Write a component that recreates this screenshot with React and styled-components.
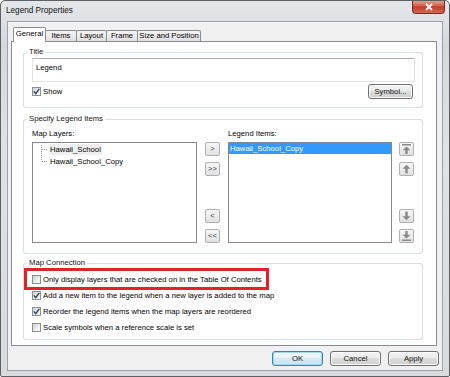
import React from 'react';
import styled, { createGlobalStyle, css } from 'styled-components';

const Global = createGlobalStyle`
  html, body { margin: 0; padding: 0; background: #ffffff; }
  body {
    font-family: "Liberation Sans", Arial, sans-serif;
    font-size: 7.7px;
    color: #000;
  }
  * { box-sizing: border-box; }
`;

const Window = styled.div`
  width: 450px;
  height: 377px;
  border: 1px solid #5d6166;
  border-radius: 5px 5px 2px 2px;
  background: linear-gradient(180deg, #e4e7ea 0%, #d5d9dd 12%, #dfe2e5 40%, #d9dcdf 100%);
  display: flex;
  flex-direction: column;
  overflow: hidden;
`;

const TitleBar = styled.div`
  height: 20px;
  flex: none;
  display: flex;
  align-items: flex-start;
  padding-left: 5px;
`;

const TitleText = styled.span`
  font-size: 8.2px;
  line-height: 20px;
  color: #111;
`;

const CloseButton = styled.div`
  margin-left: auto;
  margin-right: 4px;
  margin-top: -1px;
  width: 33px;
  height: 14px;
  border: 1px solid #7a2c22;
  border-top: none;
  border-radius: 0 0 4px 4px;
  background: linear-gradient(180deg, #e9ab9c 0%, #d46a55 40%, #c0402b 55%, #cf6a52 100%);
  display: flex;
  align-items: center;
  justify-content: center;
`;

const Frame = styled.div`
  flex: 1;
  display: flex;
  padding: 0 6px 5px 6px;
`;

const Client = styled.div`
  flex: 1;
  display: flex;
  flex-direction: column;
  border: 1px solid #9aa2ab;
  background: #f0f0f0;
  padding: 5px 3px 4px 3px;
`;

const TabStrip = styled.div`
  height: 14px;
  flex: none;
  display: flex;
  align-items: flex-end;
  padding-left: 2px;
`;

const Tab = styled.div`
  width: ${p => p.$w}px;
  border: 1px solid #898c95;
  border-bottom: none;
  border-radius: 2px 2px 0 0;
  text-align: center;
  white-space: nowrap;
  ${p => p.$active ? css`
    height: 15px;
    margin-bottom: -1px;
    background: #ffffff;
    line-height: 11px;
    position: relative;
    z-index: 2;
  ` : css`
    height: 11px;
    margin-left: -1px;
    background: linear-gradient(180deg, #f3f3f3 0%, #ebebeb 50%, #dedede 100%);
    line-height: 10px;
  `}
`;

const Panel = styled.div`
  flex: 1;
  display: flex;
  flex-direction: column;
  border: 1px solid #898c95;
  background: #ffffff;
  padding: 5px 13px 0 11px;
  margin-right: 2px;
`;

const Group = styled.div`
  margin-top: ${p => p.$mt || 0}px;
  display: flex;
  flex-direction: column;
`;

const GroupHead = styled.div`
  height: 10px;
  display: flex;
  align-items: flex-end;
`;

const HeadEdge = styled.div`
  height: 5px;
  border-top: 1px solid #d5dfe5;
  ${p => p.$right ? css`
    flex: 1;
    border-right: 1px solid #d5dfe5;
    border-top-right-radius: 3px;
  ` : css`
    width: 4px;
    border-left: 1px solid #d5dfe5;
    border-top-left-radius: 3px;
  `}
`;

const HeadText = styled.span`
  align-self: stretch;
  line-height: 10px;
  padding: 0 2px;
  color: #111;
`;

const GroupBody = styled.div`
  border: 1px solid #d5dfe5;
  border-top: none;
  border-radius: 0 0 3px 3px;
  padding: ${p => p.$pad};
  display: flex;
  flex-direction: column;
`;

const TextInput = styled.div`
  height: 24px;
  border: 1px solid #dfe3e8;
  border-top-color: #abadb3;
  background: #fff;
  padding: 4px 3px;
  line-height: 10px;
`;

const ShowRow = styled.div`
  margin-top: 2px;
  height: 15px;
  display: flex;
  align-items: center;
`;

const CheckRow = styled.div`
  height: 16px;
  display: flex;
  align-items: center;
  gap: 2px;
  white-space: nowrap;
`;

const Box = styled.span`
  width: 9px;
  height: 9px;
  flex: none;
  border: 1px solid #8e8f8f;
  background: linear-gradient(135deg, #cdd1d6 0%, #eef0f2 60%, #fafafa 100%);
  display: flex;
  align-items: center;
  justify-content: center;
`;

const PushButton = styled.div`
  width: ${p => p.$w}px;
  height: 15px;
  border: 1px solid ${p => p.$default ? '#3c7fb1' : '#707070'};
  border-radius: 3px;
  background: ${p => p.$default
    ? 'linear-gradient(180deg, #f2f8fb 0%, #eaf3f8 50%, #d8e9f2 50%, #cde2ee 100%)'
    : 'linear-gradient(180deg, #f2f2f2 0%, #ebebeb 50%, #dddddd 50%, #cfcfcf 100%)'};
  box-shadow: inset 0 0 0 1px ${p => p.$default ? '#9fd9f3' : '#fbfbfb'};
  line-height: 13px;
  text-align: center;
  color: #111;
  ${p => p.$push && css`margin-left: auto; margin-right: 2px;`}
`;

const ItemsGrid = styled.div`
  display: grid;
  grid-template-columns: 165px 15px 164px 15px;
  grid-template-rows: 10px 101px;
  column-gap: 8px;
  row-gap: 3px;
`;

const FieldLabel = styled.div`
  grid-row: 1;
  grid-column: ${p => p.$col};
  line-height: 10px;
  white-space: nowrap;
`;

const ListBox = styled.div`
  grid-row: 2;
  grid-column: ${p => p.$col};
  border: 1px solid #828790;
  background: #fff;
  display: flex;
  flex-direction: column;
  overflow: hidden;
`;

const TreeRow = styled.div`
  height: 12px;
  display: flex;
  align-items: center;
  padding-left: 7px;
  white-space: nowrap;
`;

const TreeLabel = styled.span`
  line-height: 11px;
  padding: 0 1px;
  background: ${p => p.$active ? '#efefef' : 'transparent'};
`;

const SelectedItem = styled.div`
  height: 11px;
  line-height: 11px;
  background: #3399ff;
  color: #fff;
  padding-left: 1px;
  white-space: nowrap;
`;

const MoveColumn = styled.div`
  grid-row: 2;
  grid-column: ${p => p.$col};
  display: flex;
  flex-direction: column;
  justify-content: space-between;
  ${p => p.$shift && css`margin-left: -1px;`}
`;

const MovePair = styled.div`
  display: flex;
  flex-direction: column;
  gap: 6px;
`;

const MoveButton = styled.div`
  width: 15px;
  height: 14px;
  border: 1px solid #acb0b4;
  border-radius: 2px;
  background: linear-gradient(180deg, #f7f7f7 0%, #ececec 50%, #e0e0e0 100%);
  display: flex;
  align-items: center;
  justify-content: center;
  line-height: 12px;
  color: #333;
  font-size: 7.5px;
`;

const Highlight = styled.div`
  align-self: flex-start;
  margin: -3px 0 -3px -8px;
  border: 3px solid #e0222b;
  padding: 0 4px 0 5px;
`;

const ButtonBar = styled.div`
  margin-top: 5px;
  display: flex;
  justify-content: flex-end;
  gap: 7px;
`;

const Check = ({ checked }) => (
  <Box>
    {checked && (
      <svg width="7" height="7" viewBox="0 0 7 7">
        <path d="M0.8 3.4 L2.7 5.6 L6.3 0.8" fill="none" stroke="#2d3d62" strokeWidth="1.4" />
      </svg>
    )}
  </Box>
);

const CheckItem = ({ checked, children }) => (
  <CheckRow>
    <Check checked={checked} />
    <span>{children}</span>
  </CheckRow>
);

const GroupBox = ({ title, mt, pad, children }) => (
  <Group $mt={mt}>
    <GroupHead>
      <HeadEdge />
      <HeadText>{title}</HeadText>
      <HeadEdge $right />
    </GroupHead>
    <GroupBody $pad={pad}>{children}</GroupBody>
  </Group>
);

const Connector = ({ first }) => (
  <svg width="9" height="12" viewBox="0 0 9 12" style={{ flex: 'none' }}>
    <line x1="1.5" y1={first ? 2 : 0} x2="1.5" y2={first ? 12 : 6.5} stroke="#9a9a9a" strokeDasharray="1 1" />
    <line x1="2" y1="6.5" x2="8" y2="6.5" stroke="#9a9a9a" strokeDasharray="1 1" />
  </svg>
);

const ArrowIcon = ({ kind }) => {
  const fill = '#8a8a8a';
  return (
    <svg width="9" height="10" viewBox="0 0 9 10">
      {kind === 'top' && <>
        <rect x="0" y="0" width="9" height="1.5" fill={fill} />
        <path d="M4.5 2.5 L0.5 6.3 H3.3 V10 H5.7 V6.3 H8.5 Z" fill={fill} />
      </>}
      {kind === 'up' && <path d="M4.5 0.8 L0.5 4.8 H3.3 V9.5 H5.7 V4.8 H8.5 Z" fill={fill} />}
      {kind === 'down' && <path d="M4.5 9.2 L0.5 5.2 H3.3 V0.5 H5.7 V5.2 H8.5 Z" fill={fill} />}
      {kind === 'bottom' && <>
        <path d="M4.5 7.5 L0.5 3.7 H3.3 V0 H5.7 V3.7 H8.5 Z" fill={fill} />
        <rect x="0" y="8.5" width="9" height="1.5" fill={fill} />
      </>}
    </svg>
  );
};

export default function App() {
  return (
    <>
      <Global />
      <Window>
        <TitleBar>
          <TitleText>Legend Properties</TitleText>
          <CloseButton>
            <svg width="10" height="8" viewBox="0 0 10 8">
              <path d="M2 1 L8 7 M8 1 L2 7" stroke="#ffffff" strokeWidth="1.8" />
            </svg>
          </CloseButton>
        </TitleBar>
        <Frame>
          <Client>
            <TabStrip>
              <Tab $active $w={33}>General</Tab>
              <Tab $w={32}>Items</Tab>
              <Tab $w={31}>Layout</Tab>
              <Tab $w={32}>Frame</Tab>
              <Tab $w={64}>Size and Position</Tab>
            </TabStrip>
            <Panel>
              <GroupBox title="Title" pad="1px 7px 8px 8px">
                <TextInput>Legend</TextInput>
                <ShowRow>
                  <CheckItem checked>Show</CheckItem>
                  <PushButton $w={45} $push>Symbol...</PushButton>
                </ShowRow>
              </GroupBox>

              <GroupBox title="Specify Legend Items" mt={6} pad="5px 7px 10px 8px">
                <ItemsGrid>
                  <FieldLabel $col={1}>Map Layers:</FieldLabel>
                  <ListBox $col={1}>
                    <TreeRow>
                      <Connector first />
                      <TreeLabel $active>Hawaii_School</TreeLabel>
                    </TreeRow>
                    <TreeRow>
                      <Connector />
                      <TreeLabel>Hawaii_School_Copy</TreeLabel>
                    </TreeRow>
                  </ListBox>
                  <MoveColumn $col={2}>
                    <MovePair>
                      <MoveButton>&gt;</MoveButton>
                      <MoveButton>&gt;&gt;</MoveButton>
                    </MovePair>
                    <MovePair>
                      <MoveButton>&lt;</MoveButton>
                      <MoveButton>&lt;&lt;</MoveButton>
                    </MovePair>
                  </MoveColumn>
                  <FieldLabel $col={3}>Legend Items:</FieldLabel>
                  <ListBox $col={3}>
                    <SelectedItem>Hawaii_School_Copy</SelectedItem>
                  </ListBox>
                  <MoveColumn $col={4} $shift>
                    <MovePair>
                      <MoveButton><ArrowIcon kind="top" /></MoveButton>
                      <MoveButton><ArrowIcon kind="up" /></MoveButton>
                    </MovePair>
                    <MovePair>
                      <MoveButton><ArrowIcon kind="down" /></MoveButton>
                      <MoveButton><ArrowIcon kind="bottom" /></MoveButton>
                    </MovePair>
                  </MoveColumn>
                </ItemsGrid>
              </GroupBox>

              <GroupBox title="Map Connection" mt={4} pad="3px 7px 4px 8px">
                <Highlight>
                  <CheckItem>Only display layers that are checked on in the Table Of Contents</CheckItem>
                </Highlight>
                <CheckItem checked>Add a new item to the legend when a new layer is added to the map</CheckItem>
                <CheckItem checked>Reorder the legend items when the map layers are reordered</CheckItem>
                <CheckItem>Scale symbols when a reference scale is set</CheckItem>
              </GroupBox>
            </Panel>
            <ButtonBar>
              <PushButton $w={51} $default>OK</PushButton>
              <PushButton $w={51}>Cancel</PushButton>
              <PushButton $w={51}>Apply</PushButton>
            </ButtonBar>
          </Client>
        </Frame>
      </Window>
    </>
  );
}
